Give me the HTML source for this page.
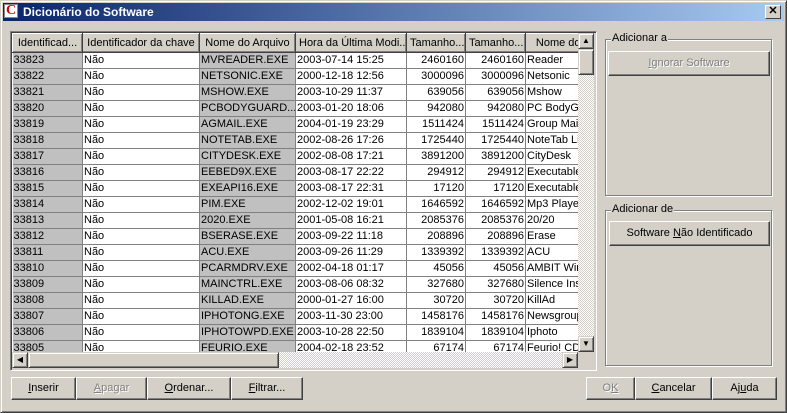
<!DOCTYPE html>
<html><head><meta charset="utf-8"><style>
*{margin:0;padding:0;box-sizing:border-box}
body{width:787px;height:413px;background:#d4d0c8;font-family:"Liberation Sans",sans-serif;font-size:11px;position:relative;overflow:hidden;color:#000}
.win{position:absolute;left:0;top:0;width:787px;height:413px;border:1px solid;border-color:#d4d0c8 #404040 #404040 #d4d0c8;box-shadow:inset 1px 1px #fff,inset -1px -1px #808080}
.title{position:absolute;left:3px;top:3px;width:781px;height:18px;background:linear-gradient(90deg,#0a246a,#a6caf0);color:#fff;font-weight:bold;font-size:12px;line-height:18px;padding-left:20px}
.ico{position:absolute;left:4px;top:4px;width:14px;height:14px;background:#fff;border:1px solid #888;color:#d00;font:bold 14px/12px "Liberation Serif",serif;text-align:center}
.close{position:absolute;left:765px;top:5px;width:16px;height:14px;background:#d4d0c8;border:1px solid;border-color:#fff #404040 #404040 #fff;font:bold 11px/11px "Liberation Sans";text-align:center;color:#000}
.btn{position:absolute;height:23px;border:1px solid;border-color:#fff #404040 #404040 #fff;box-shadow:inset -1px -1px #808080;text-align:center;line-height:21px;background:#d4d0c8}
.dis{color:#808080;text-shadow:1px 1px #fff}
.sunk{position:absolute;border:1px solid;border-color:#808080 #fff #fff #808080;box-shadow:inset 1px 1px #404040}
.grid{position:absolute;left:12px;top:33px;width:566px;height:319px;overflow:hidden;background:#fff}
table{border-collapse:collapse;table-layout:fixed;width:620px}
td,th{border-right:1px solid #808080;border-bottom:1px solid #808080;height:16px;padding:0 1px;white-space:nowrap;overflow:hidden;font-weight:normal;line-height:15px}
th{height:19px;line-height:16px;background:#d4d0c8;border:1px solid;border-color:#fff #404040 #404040 #fff;box-shadow:inset -1px -1px #808080;text-align:center;padding:0 3px}
td.g{background:#c0c0c0}
td.r{text-align:right}
.chk{background-color:#e8e6e2;background-image:repeating-conic-gradient(#d4d0c8 0 25%,#fff 0 50%);background-size:2px 2px}
.sb{position:absolute;background:#d4d0c8;border:1px solid;border-color:#d4d0c8 #404040 #404040 #d4d0c8;box-shadow:inset 1px 1px #fff,inset -1px -1px #808080;font-size:8px;text-align:center;line-height:14px}
.grp{position:absolute;border:1px solid #808080;box-shadow:1px 1px #fff,inset 1px 1px #fff}
.grp span{position:absolute;top:-8px;left:5px;background:#d4d0c8;padding:0 1px}
u{text-decoration:underline}
</style></head><body>
<div class="win"></div>
<div class="title">Dicionário do Software</div>
<div class="ico">C</div>
<div class="close">✕</div>

<div class="sunk" style="left:10px;top:31px;width:587px;height:340px"></div>
<div class="grid"><table>
<colgroup><col style="width:70px"><col style="width:117px"><col style="width:96px"><col style="width:111px"><col style="width:59px"><col style="width:60px"><col style="width:107px"></colgroup>
<tr><th>Identificad...</th><th>Identificador da chave</th><th>Nome do Arquivo</th><th>Hora da Última Modi...</th><th>Tamanho...</th><th>Tamanho...</th><th>Nome do Produto</th></tr>
<tr><td class="g">33823</td><td>Não</td><td class="g">MVREADER.EXE</td><td>2003-07-14 15:25</td><td class="r">2460160</td><td class="r">2460160</td><td>Reader</td></tr>
<tr><td class="g">33822</td><td>Não</td><td class="g">NETSONIC.EXE</td><td>2000-12-18 12:56</td><td class="r">3000096</td><td class="r">3000096</td><td>Netsonic</td></tr>
<tr><td class="g">33821</td><td>Não</td><td class="g">MSHOW.EXE</td><td>2003-10-29 11:37</td><td class="r">639056</td><td class="r">639056</td><td>Mshow</td></tr>
<tr><td class="g">33820</td><td>Não</td><td class="g">PCBODYGUARD....</td><td>2003-01-20 18:06</td><td class="r">942080</td><td class="r">942080</td><td>PC BodyGuard</td></tr>
<tr><td class="g">33819</td><td>Não</td><td class="g">AGMAIL.EXE</td><td>2004-01-19 23:29</td><td class="r">1511424</td><td class="r">1511424</td><td>Group Mail</td></tr>
<tr><td class="g">33818</td><td>Não</td><td class="g">NOTETAB.EXE</td><td>2002-08-26 17:26</td><td class="r">1725440</td><td class="r">1725440</td><td>NoteTab Light</td></tr>
<tr><td class="g">33817</td><td>Não</td><td class="g">CITYDESK.EXE</td><td>2002-08-08 17:21</td><td class="r">3891200</td><td class="r">3891200</td><td>CityDesk</td></tr>
<tr><td class="g">33816</td><td>Não</td><td class="g">EEBED9X.EXE</td><td>2003-08-17 22:22</td><td class="r">294912</td><td class="r">294912</td><td>Executable</td></tr>
<tr><td class="g">33815</td><td>Não</td><td class="g">EXEAPI16.EXE</td><td>2003-08-17 22:31</td><td class="r">17120</td><td class="r">17120</td><td>Executable</td></tr>
<tr><td class="g">33814</td><td>Não</td><td class="g">PIM.EXE</td><td>2002-12-02 19:01</td><td class="r">1646592</td><td class="r">1646592</td><td>Mp3 Player</td></tr>
<tr><td class="g">33813</td><td>Não</td><td class="g">2020.EXE</td><td>2001-05-08 16:21</td><td class="r">2085376</td><td class="r">2085376</td><td>20/20</td></tr>
<tr><td class="g">33812</td><td>Não</td><td class="g">BSERASE.EXE</td><td>2003-09-22 11:18</td><td class="r">208896</td><td class="r">208896</td><td>Erase</td></tr>
<tr><td class="g">33811</td><td>Não</td><td class="g">ACU.EXE</td><td>2003-09-26 11:29</td><td class="r">1339392</td><td class="r">1339392</td><td>ACU</td></tr>
<tr><td class="g">33810</td><td>Não</td><td class="g">PCARMDRV.EXE</td><td>2002-04-18 01:17</td><td class="r">45056</td><td class="r">45056</td><td>AMBIT Win</td></tr>
<tr><td class="g">33809</td><td>Não</td><td class="g">MAINCTRL.EXE</td><td>2003-08-06 08:32</td><td class="r">327680</td><td class="r">327680</td><td>Silence Ins</td></tr>
<tr><td class="g">33808</td><td>Não</td><td class="g">KILLAD.EXE</td><td>2000-01-27 16:00</td><td class="r">30720</td><td class="r">30720</td><td>KillAd</td></tr>
<tr><td class="g">33807</td><td>Não</td><td class="g">IPHOTONG.EXE</td><td>2003-11-30 23:00</td><td class="r">1458176</td><td class="r">1458176</td><td>Newsgroup</td></tr>
<tr><td class="g">33806</td><td>Não</td><td class="g">IPHOTOWPD.EXE</td><td>2003-10-28 22:50</td><td class="r">1839104</td><td class="r">1839104</td><td>Iphoto</td></tr>
<tr><td class="g">33805</td><td>Não</td><td class="g">FEURIO.EXE</td><td>2004-02-18 23:52</td><td class="r">67174</td><td class="r">67174</td><td>Feurio! CD-</td></tr>
</table></div>
<div class="chk" style="position:absolute;left:578px;top:33px;width:16px;height:319px"></div>
<div class="sb" style="left:578px;top:33px;width:16px;height:16px">▲</div>
<div class="sb" style="left:578px;top:49px;width:16px;height:26px"></div>
<div class="sb" style="left:578px;top:336px;width:16px;height:16px">▼</div>
<div class="chk" style="position:absolute;left:12px;top:352px;width:566px;height:16px"></div>
<div class="sb" style="left:12px;top:352px;width:16px;height:16px">◀</div>
<div class="sb" style="left:28px;top:352px;width:251px;height:16px"></div>
<div class="sb" style="left:562px;top:352px;width:16px;height:16px">▶</div>
<div style="position:absolute;left:578px;top:352px;width:16px;height:16px;background:#d4d0c8"></div>

<div class="grp" style="left:605px;top:39px;width:167px;height:157px"><span>Adicionar a</span></div>
<div class="btn dis" style="left:608px;top:51px;width:162px;height:25px;line-height:23px"><u>I</u>gnorar Software</div>
<div class="grp" style="left:605px;top:210px;width:167px;height:156px"><span>Adicionar de</span></div>
<div class="btn" style="left:609px;top:221px;width:161px;height:25px;line-height:23px">Software <u>N</u>ão Identificado</div>

<div class="btn" style="left:11px;top:377px;width:65px"><u>I</u>nserir</div>
<div class="btn dis" style="left:76px;top:377px;width:71px"><u>A</u>pagar</div>
<div class="btn" style="left:147px;top:377px;width:84px"><u>O</u>rdenar...</div>
<div class="btn" style="left:231px;top:377px;width:72px"><u>F</u>iltrar...</div>
<div class="btn dis" style="left:586px;top:377px;width:49px">O<u>K</u></div>
<div class="btn" style="left:635px;top:377px;width:77px"><u>C</u>ancelar</div>
<div class="btn" style="left:712px;top:377px;width:65px">Aj<u>u</u>da</div>
</body></html>
